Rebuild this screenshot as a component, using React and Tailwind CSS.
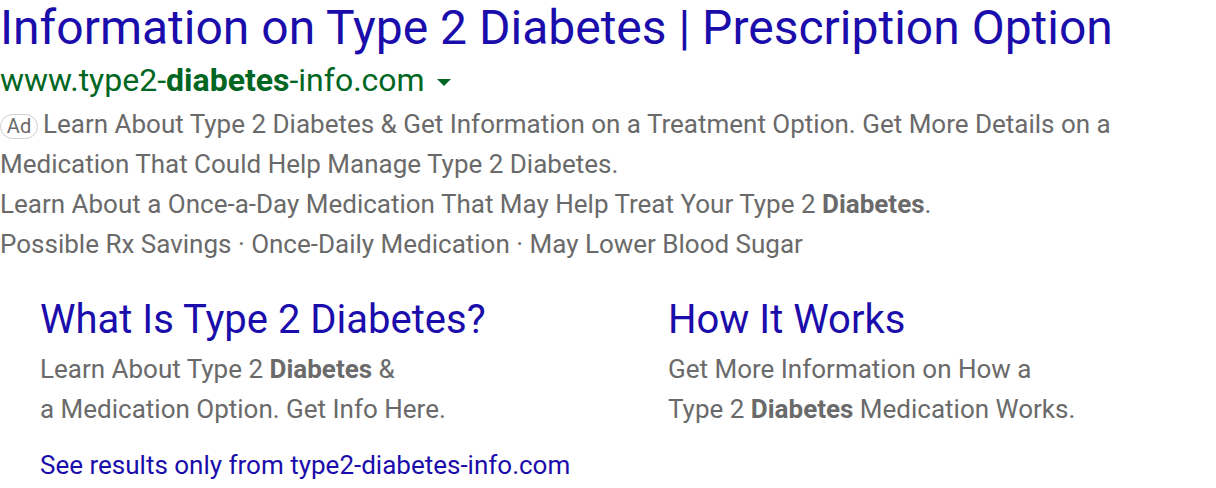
export default function App() {
  return (
    <div className="min-h-screen bg-white font-['Roboto',sans-serif] text-[#6a6a6a]">
      <div>
        <h1 className="text-[48px] leading-[56px] text-[#1a0dab] whitespace-nowrap">
          Information on Type 2 Diabetes | Prescription Option
        </h1>
        <div className="flex items-center text-[32px] leading-[48px] text-[#006621]">
          <span>
            www.type2-<b className="font-bold">diabetes</b>-info.com
          </span>
          <span className="ml-[12px] mt-[5px] h-0 w-0 border-x-[7px] border-t-[7px] border-x-transparent border-t-[#006621]" />
        </div>
        <div className="text-[26px] leading-[40px]">
          <p>
            <span className="mr-[5px] inline-flex h-[25px] w-[38px] items-center justify-center rounded-[13px] border border-[#cfcfcf] align-[0px] text-[20px] leading-none text-[#6a6a6a]">
              Ad
            </span>
            Learn About Type 2 Diabetes &amp; Get Information on a Treatment Option. Get More Details on a
            <br />
            Medication That Could Help Manage Type 2 Diabetes.
          </p>
          <p>
            Learn About a Once-a-Day Medication That May Help Treat Your Type 2 <b className="font-bold">Diabetes</b>.
          </p>
          <p>Possible Rx Savings · Once-Daily Medication · May Lower Blood Sugar</p>
        </div>
      </div>

      <div className="mt-[30px] grid grid-cols-[628px_1fr] pl-[40px]">
        <div>
          <h3 className="text-[40px] leading-[52px] text-[#1a0dab]">What Is Type 2 Diabetes?</h3>
          <p className="mt-[3px] text-[26px] leading-[40px]">
            Learn About Type 2 <b className="font-bold">Diabetes</b> &amp;
            <br />a Medication Option. Get Info Here.
          </p>
        </div>
        <div>
          <h3 className="text-[40px] leading-[52px] text-[#1a0dab]">How It Works</h3>
          <p className="mt-[3px] text-[26px] leading-[40px]">
            Get More Information on How a
            <br />
            Type 2 <b className="font-bold">Diabetes</b> Medication Works.
          </p>
        </div>
      </div>
      <div className="mt-[16px] pl-[40px] text-[26px] leading-[40px] text-[#1a0dab]">
        See results only from type2-diabetes-info.com
      </div>
    </div>
  );
}
